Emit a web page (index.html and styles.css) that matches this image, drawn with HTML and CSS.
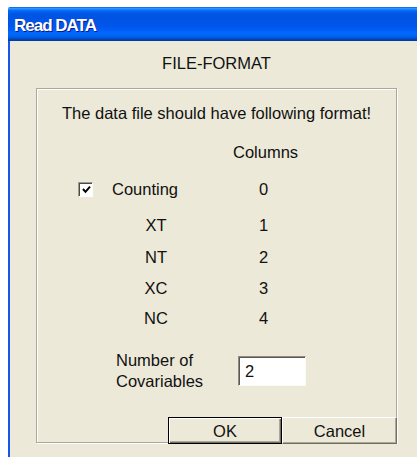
FILE: index.html
```html
<!DOCTYPE html>
<html lang="en">
<head>
<meta charset="utf-8">
<title>Read DATA</title>
<link rel="stylesheet" href="styles.css">
</head>
<body>
<div class="window">
  <div class="titlebar"><span class="title">Read DATA</span></div>
  <div class="client">
    <div class="heading">FILE-FORMAT</div>
    <div class="groupbox">
      <div class="intro">The data file should have following format!</div>

      <div class="row row-head"><span class="num">Columns</span></div>

      <div class="row row-check">
        <label class="check">
          <span class="box">
            <svg width="9" height="9" viewBox="0 0 9 9"><polyline points="1,4 3.5,6.8 8,1.6" fill="none" stroke="#000" stroke-width="2"/></svg>
          </span>
          <span>Counting</span>
        </label>
        <span class="num">0</span>
      </div>

      <div class="row row-xt"><span class="name">XT</span><span class="num">1</span></div>
      <div class="row row-nt"><span class="name">NT</span><span class="num">2</span></div>
      <div class="row row-xc"><span class="name">XC</span><span class="num">3</span></div>
      <div class="row row-nc"><span class="name">NC</span><span class="num">4</span></div>

      <div class="covrow">
        <div class="covlabel">Number of<br>Covariables</div>
        <div class="edit">2</div>
      </div>

      <div class="buttons">
        <button class="btn btn-default">OK</button>
        <button class="btn">Cancel</button>
      </div>
    </div>
  </div>
</div>
</body>
</html>
```
FILE: styles.css
```css
html, body {
  margin: 0;
  padding: 0;
  background: #fff;
  height: 100%;
  overflow: hidden;
}

body {
  font-family: "Liberation Sans", Arial, sans-serif;
  font-size: 16.5px;
  color: #111;
}

.window {
  margin: 7px 0 0 8px;
  height: 450px;
  display: flex;
  flex-direction: column;
}

/* Luna caption bar */
.titlebar {
  height: 34px;
  box-sizing: border-box;
  padding: 2px 0 0 6px;
  line-height: 32px;
  border-top-left-radius: 2px;
  background: linear-gradient(180deg,
    #0058ee 0%, #3593ff 4%, #288eff 6%, #127dff 8%, #036ffc 10%,
    #0262ee 14%, #0057e5 20%, #0054e3 24%, #0055eb 56%, #005bf5 66%,
    #026afe 76%, #0062ef 86%, #0052d6 92%, #0040ab 96%, #003b9f 100%);
}

.title {
  color: #fff;
  font-weight: bold;
  font-size: 17px;
  letter-spacing: -1px;
  text-shadow: 1px 1px 0 #0a1a8a;
}

.client {
  flex: 1;
  background: #ece9d8;
  border-left: 2px solid #1656ea;
  padding-left: 26px;
}

.heading {
  width: 361px;
  height: 44px;
  line-height: 44px;
  text-align: center;
}

/* etched frame */
.groupbox {
  width: 361px;
  box-sizing: border-box;
  margin-top: 3px;
  padding-top: 14px;
  border: 1px solid #aca899;
  box-shadow: inset 1px 1px 0 #fff, 1px 1px 0 #fff;
  display: flex;
  flex-direction: column;
}

.intro {
  line-height: 20px;
  text-align: center;
  padding-left: 0;
}

.row {
  display: grid;
  grid-template-columns: 79px 80px 37px 61px;
  line-height: 20px;
  height: 20px;
  align-items: center;
}

.row .name { grid-column: 2; text-align: center; }
.row .num { grid-column: 4; text-align: center; white-space: nowrap; }

.row-head { margin-top: 19px; }
.row-check { margin-top: 17px; }
.row-xt { margin-top: 16px; }
.row-nt { margin-top: 12px; }
.row-xc { margin-top: 11px; }
.row-nc { margin-top: 10px; }

.check {
  grid-column: 1 / span 2;
  display: flex;
  align-items: center;
  padding-left: 41px;
}

.box {
  width: 15px;
  height: 15px;
  box-sizing: border-box;
  margin-right: 19px;
  background: #fff;
  border-top: 1px solid #9d9a8e;
  border-left: 1px solid #9d9a8e;
  border-right: 1px solid #fff;
  border-bottom: 1px solid #fff;
  box-shadow: inset 1px 1px 0 #4a4a44;
  display: flex;
  align-items: center;
  justify-content: center;
}

.box svg { display: block; margin: 1px 0 0 1px; }

.covrow {
  margin-top: 22px;
  height: 42px;
  display: flex;
  align-items: center;
  padding-left: 79px;
}

.covlabel {
  width: 122px;
  line-height: 21px;
}

.edit {
  width: 68px;
  height: 30px;
  box-sizing: border-box;
  padding-left: 6px;
  line-height: 28px;
  background: #fff;
  border-top: 1px solid #8e8c82;
  border-left: 1px solid #8e8c82;
  border-right: 1px solid #fbfaf6;
  border-bottom: 1px solid #fbfaf6;
  box-shadow: inset 1px 1px 0 #5a5850;
}

.buttons {
  margin-top: 25px;
  margin-right: -1px;
  margin-bottom: -2px;
  display: flex;
  justify-content: flex-end;
}

.btn {
  font: inherit;
  color: #111;
  height: 27px;
  box-sizing: border-box;
  padding: 0;
  line-height: 24px;
  background: #ece9d8;
  border-style: solid;
  border-width: 1px;
  border-color: #fff #716f64 #716f64 #fff;
  box-shadow: inset -1px -1px 0 #aca899;
  width: 115px;
}

.btn-default {
  width: 114px;
  border-color: #000;
  box-shadow: inset 1px 1px 0 #fff, inset -1px -1px 0 #716f64, inset -2px -2px 0 #aca899;
}
```
